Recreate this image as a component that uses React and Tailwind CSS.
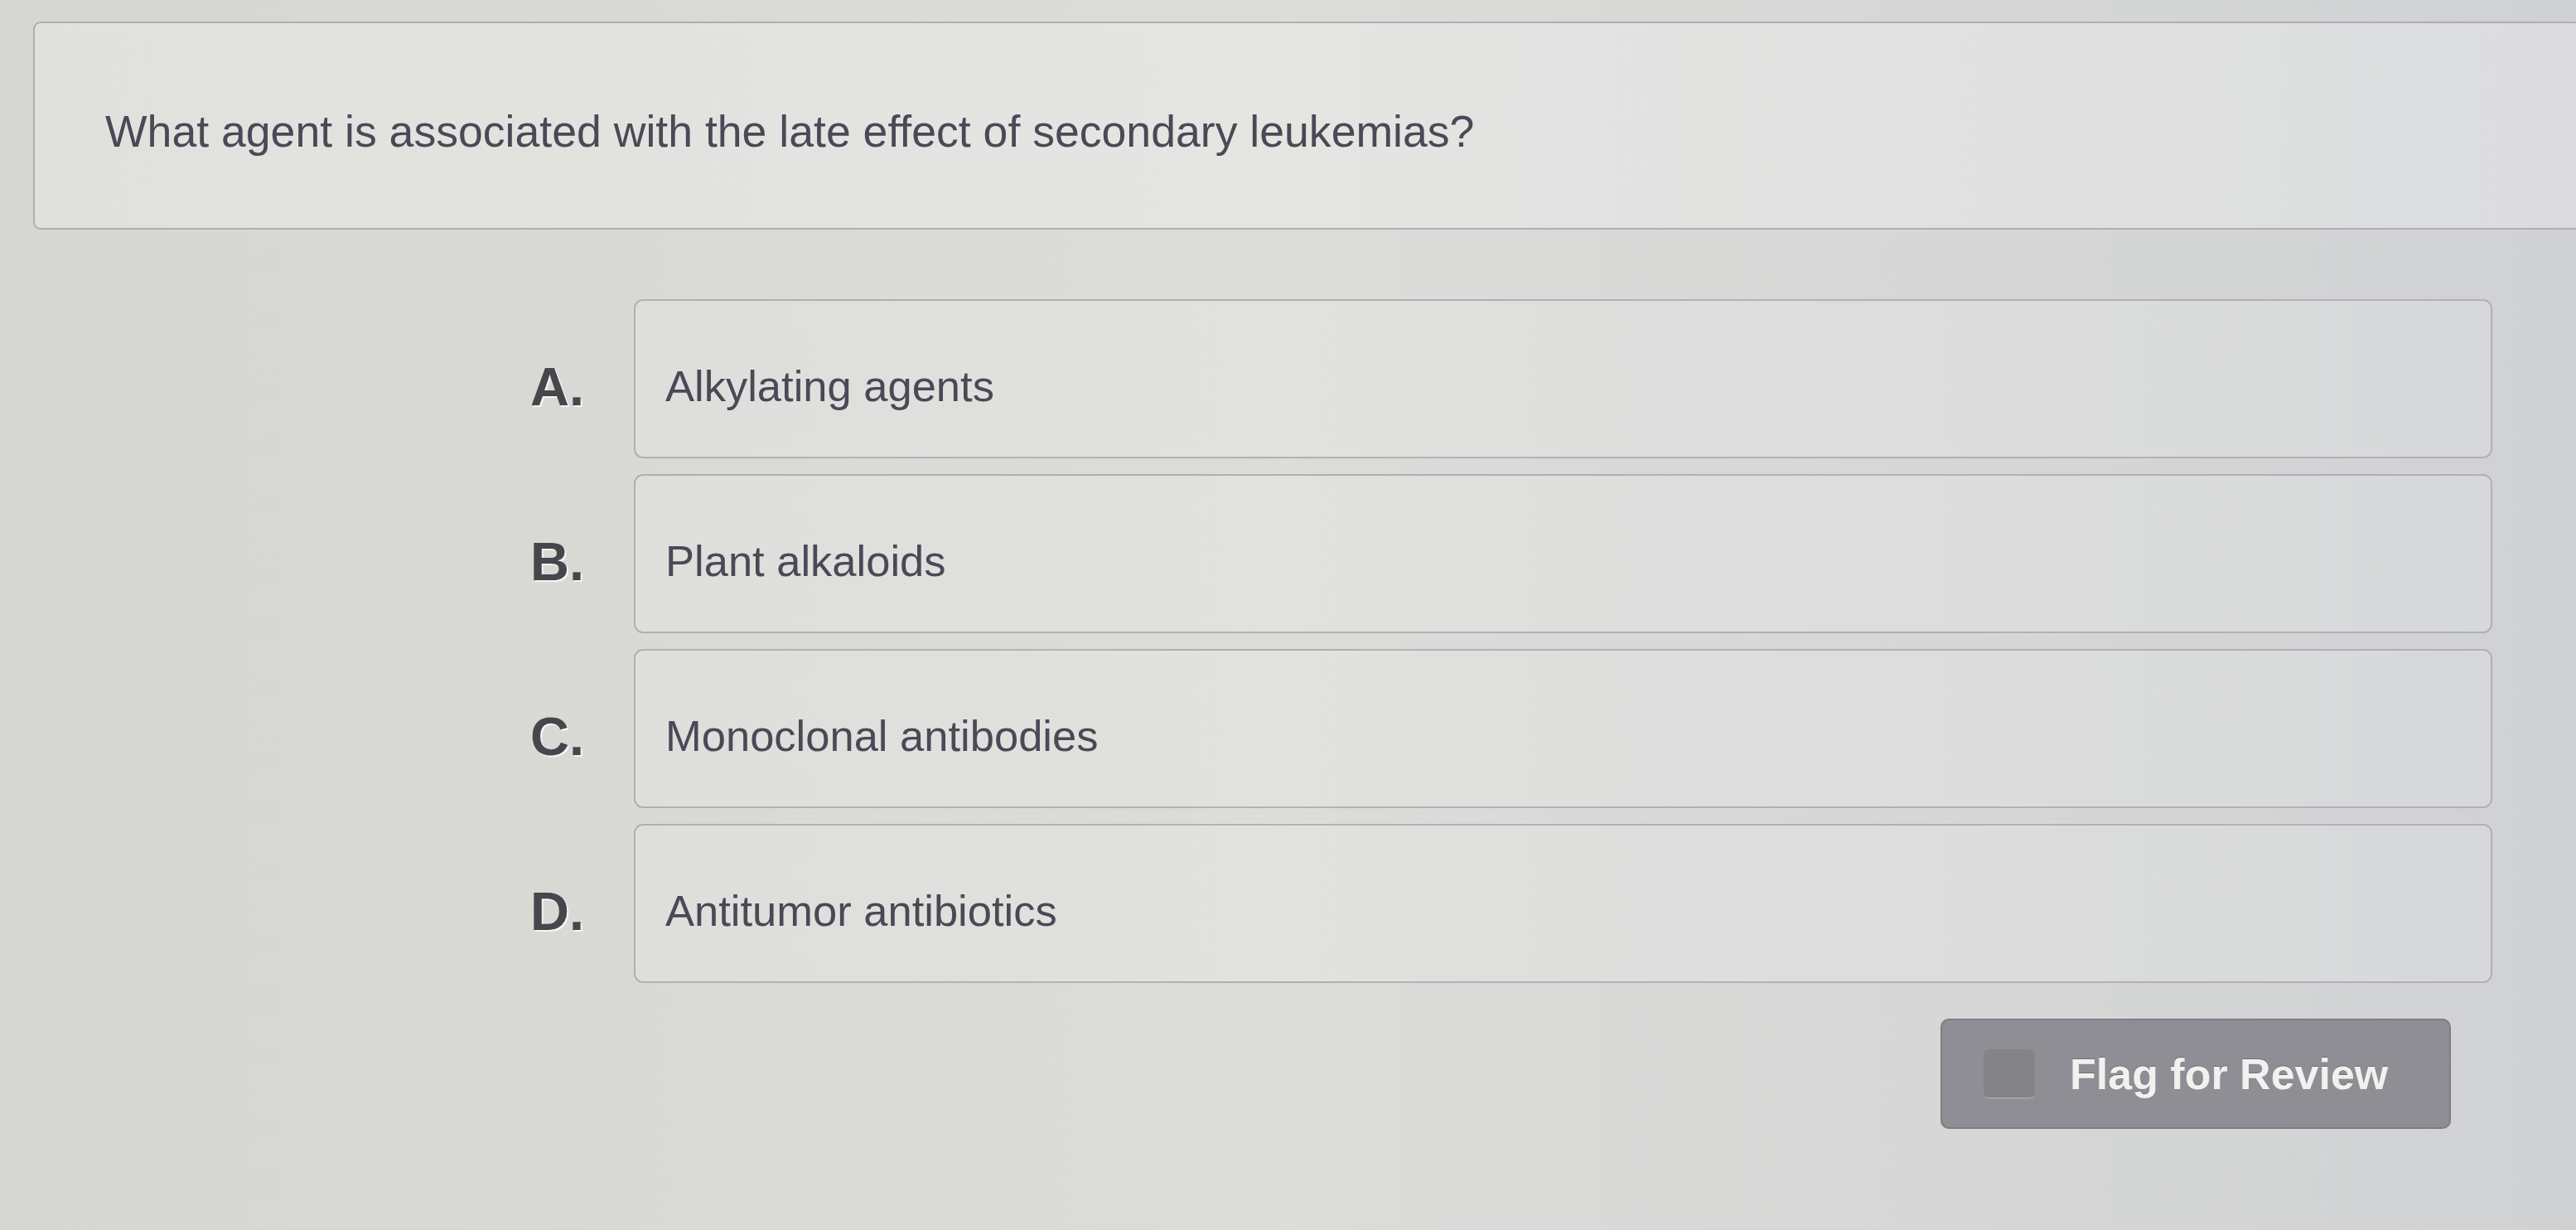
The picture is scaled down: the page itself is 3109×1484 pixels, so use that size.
const OPTIONS = [
  { key: 'A', text: 'Alkylating agents' },
  { key: 'B', text: 'Plant alkaloids' },
  { key: 'C', text: 'Monoclonal antibodies' },
  { key: 'D', text: 'Antitumor antibiotics' },
]

function OptionRow({ letter, text }) {
  return (
    <div className="flex items-center">
      <div
        className="w-[125px] shrink-0 pt-[18px] text-[65px] font-bold leading-none text-[#46464d] [text-shadow:2px_2px_0_#f4f4f1]"
      >
        {letter}.
      </div>
      <div className="flex h-[192px] flex-1 items-center rounded-[11px] border-2 border-[#b0b0b6] bg-white/15 pl-[36px] pt-[18px]">
        <span className="text-[52.5px] leading-none text-[#4a4956]">{text}</span>
      </div>
    </div>
  )
}

export default function App() {
  return (
    <div
      className="h-[1484px] w-full overflow-hidden bg-linear-to-r from-[#d6d7d2] via-[#dcddd9] to-[#d0d1d3] pt-[26px] font-['Liberation_Sans',Arial,sans-serif]"
    >
      {/* question card runs off the right edge */}
      <div className="flex pl-[40px]">
        <div className="flex h-[251px] w-[3100px] shrink-0 items-center rounded-[9px] border-2 border-[#aeaeb4] bg-white/25 pl-[85px] pt-[14px]">
          <span className="text-[53.6px] leading-none text-[#4a4956]">
            What agent is associated with the late effect of secondary leukemias?
          </span>
        </div>
      </div>

      <div className="mt-[84px] flex flex-col gap-[19px] pl-[640px] pr-[101px]">
        {OPTIONS.map(o => (
          <OptionRow key={o.key} letter={o.key} text={o.text} />
        ))}
      </div>

      <div className="mt-[43px] flex justify-end pr-[151px]">
        <button className="flex h-[133px] w-[616px] items-center rounded-[10px] border-2 border-[#7d7d83] bg-[#8e8e94] pl-[50px]">
          <span className="h-[60px] w-[62px] rounded-[7px] border-b-2 border-[#a4a4a8] bg-[#838388]" />
          <span className="ml-[42px] text-[52px] font-bold leading-none text-[#f1f1ef] [text-shadow:0_-1px_0_#6f6f75]">
            Flag for Review
          </span>
        </button>
      </div>
    </div>
  )
}
